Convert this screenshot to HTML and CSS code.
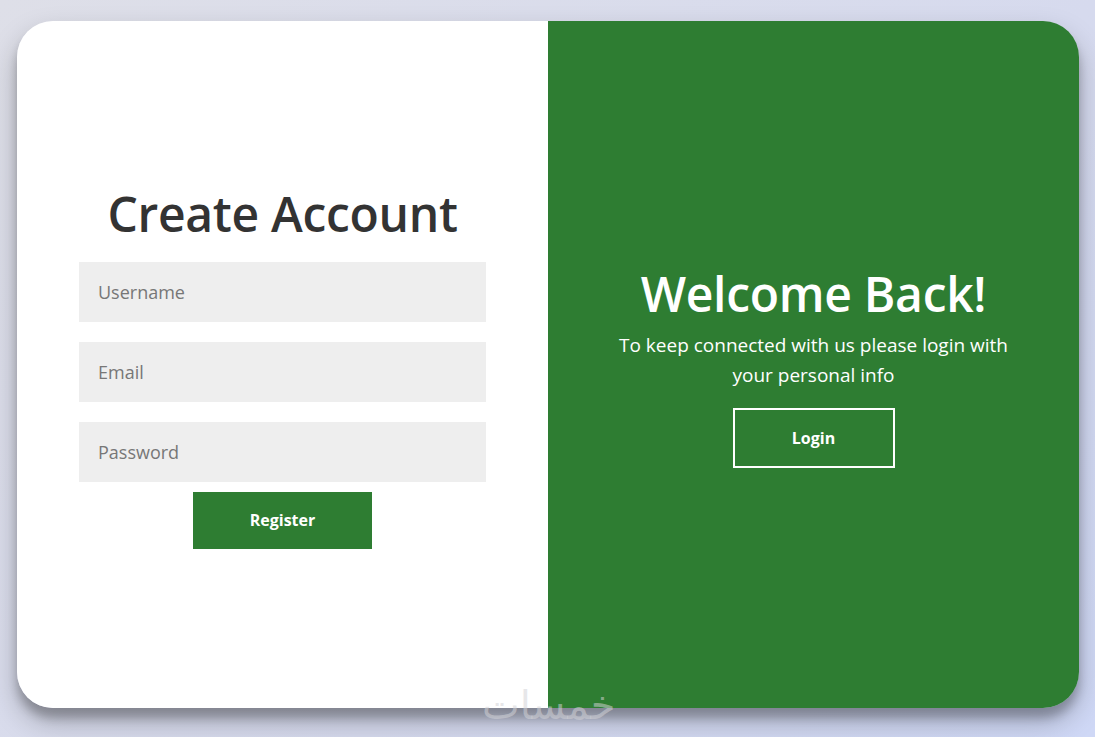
FILE: index.html
```html
<!DOCTYPE html>
<html lang="en">
<head>
  <meta charset="UTF-8" />
  <meta name="viewport" content="width=device-width, initial-scale=1.0"/>
  <title>Sign Up</title>
  <link rel="stylesheet" href="styles.css">
</head>
<body>

  <div class="container">
    <form class="panel sign-up" onsubmit="return false">
      <h1>Create Account</h1>
      <input type="text" placeholder="Username">
      <input type="email" placeholder="Email">
      <input type="password" placeholder="Password">
      <button class="btn-register">Register</button>
    </form>

    <div class="panel overlay">
      <h1>Welcome Back!</h1>
      <p>To keep connected with us please login with your personal info</p>
      <button class="btn-ghost">Login</button>
    </div>
  </div>

  <div class="watermark">خمسات</div>

</body>
</html>
```

FILE: styles.css
```css
* {
  box-sizing: border-box;
}
body {
  margin: 0;
  min-height: 100vh;
  padding: 21px 16px 29px 17px;
  display: flex;
  font-family: 'Open Sans', sans-serif;
  background: linear-gradient(135deg, #dedfe8 0%, #d6daee 60%, #cfd8f6 100%);
  color: #333;
}
.container {
  flex: 1;
  display: grid;
  grid-template-columns: 1fr 1fr;
  border-radius: 36px;
  overflow: hidden;
  box-shadow: 0 14px 28px rgba(0,0,0,0.25), 0 10px 10px rgba(0,0,0,0.22);
}
.panel {
  display: flex;
  flex-direction: column;
  align-items: center;
  justify-content: center;
  text-align: center;
}
.sign-up {
  background: #fff;
  padding: 0 62px 0 62px;
}
.sign-up h1 {
  margin: 0 0 16px;
  font-size: 48px;
  font-weight: 600;
  letter-spacing: -0.3px;
  color: #333;
}
.sign-up input {
  width: 100%;
  height: 60px;
  margin-bottom: 20px;
  padding: 0 19px;
  border: none;
  background: #eee;
  font-family: inherit;
  font-size: 18px;
  color: #333;
  outline: none;
}
.sign-up input:last-of-type {
  margin-bottom: 10px;
}
.sign-up input::placeholder {
  color: #777;
}
.btn-register {
  width: 179px;
  height: 57px;
  border: none;
  background: #2e7d32;
  color: #fff;
  font-family: inherit;
  font-size: 16px;
  font-weight: 700;
  cursor: pointer;
}
.overlay {
  background: #2e7d32;
  color: #fff;
  padding: 0 60px;
}
.overlay h1 {
  margin: 0 0 4px;
  font-size: 48px;
  font-weight: 600;
  letter-spacing: -0.3px;
}
.overlay p {
  margin: 0 0 18px;
  font-size: 19px;
  line-height: 30px;
  max-width: 400px;
}
.btn-ghost {
  width: 162px;
  height: 60px;
  border: 2px solid #fff;
  background: transparent;
  color: #fff;
  font-family: inherit;
  font-size: 16px;
  font-weight: 700;
  cursor: pointer;
}
.watermark {
  position: absolute;
  left: 482px;
  top: 676px;
  font-family: 'Noto Sans', 'DejaVu Sans', sans-serif;
  font-size: 40px;
  color: rgba(210,210,215,0.55);
  pointer-events: none;
}
```
